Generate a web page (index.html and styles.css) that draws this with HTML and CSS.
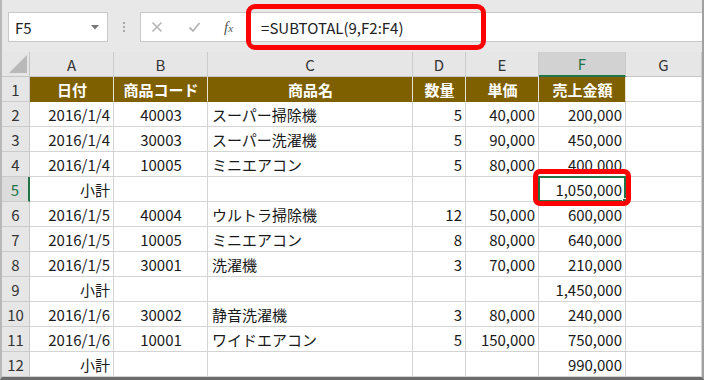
FILE: index.html
```html
<!DOCTYPE html>
<html lang="ja">
<head>
<meta charset="utf-8">
<link rel="stylesheet" href="styles.css">
</head>
<body>
<div class="frame">
  <div class="toolbar">
    <div class="namebox"><span>F5</span><svg class="dd" width="8" height="5" viewBox="0 0 8 5"><path d="M0 0H8L4 4.5Z" fill="#777"/></svg></div>
    <div class="sep"><i></i><i></i><i></i></div>
    <div class="fbar">
      <svg class="ic-x" width="12" height="12" viewBox="0 0 12 12"><path d="M1.5 1.5L10.5 10.5M10.5 1.5L1.5 10.5" stroke="#b4b4b4" stroke-width="1.6" fill="none"/></svg>
      <svg class="ic-ok" width="13" height="12" viewBox="0 0 13 12"><path d="M1.5 6.5L5 10L11.5 2" stroke="#b4b4b4" stroke-width="1.8" fill="none"/></svg>
      <span class="fx">f<span>x</span></span>
      <span class="ftext">=SUBTOTAL(9,F2:F4)</span>
    </div>
    <div class="hl-formula"></div>
  </div>
  <div class="sheet">
    <div class="corner"><svg width="18" height="18" viewBox="0 0 18 18"><path d="M18 0V18H0Z" fill="#b9b9b9"/></svg></div>
    <div class="ch">A</div><div class="ch">B</div><div class="ch">C</div><div class="ch">D</div><div class="ch">E</div><div class="ch sel">F</div><div class="ch">G</div>

    <div class="rh">1</div>
    <div class="c hd">日付</div><div class="c hd">商品コード</div><div class="c hd">商品名</div><div class="c hd">数量</div><div class="c hd">単価</div><div class="c hd">売上金額</div><div class="c"></div>

    <div class="rh">2</div>
    <div class="c r">2016/1/4</div><div class="c m">40003</div><div class="c l">スーパー掃除機</div><div class="c r">5</div><div class="c r">40,000</div><div class="c r">200,000</div><div class="c"></div>

    <div class="rh">3</div>
    <div class="c r">2016/1/4</div><div class="c m">30003</div><div class="c l">スーパー洗濯機</div><div class="c r">5</div><div class="c r">90,000</div><div class="c r">450,000</div><div class="c"></div>

    <div class="rh">4</div>
    <div class="c r">2016/1/4</div><div class="c m">10005</div><div class="c l">ミニエアコン</div><div class="c r">5</div><div class="c r">80,000</div><div class="c r">400,000</div><div class="c"></div>

    <div class="rh sel">5</div>
    <div class="c r">小計</div><div class="c m"></div><div class="c l"></div><div class="c r"></div><div class="c r"></div><div class="c r active">1,050,000<span class="selbox"></span><span class="handle"></span><span class="hl-cell"></span></div><div class="c"></div>

    <div class="rh">6</div>
    <div class="c r">2016/1/5</div><div class="c m">40004</div><div class="c l">ウルトラ掃除機</div><div class="c r">12</div><div class="c r">50,000</div><div class="c r">600,000</div><div class="c"></div>

    <div class="rh">7</div>
    <div class="c r">2016/1/5</div><div class="c m">10005</div><div class="c l">ミニエアコン</div><div class="c r">8</div><div class="c r">80,000</div><div class="c r">640,000</div><div class="c"></div>

    <div class="rh">8</div>
    <div class="c r">2016/1/5</div><div class="c m">30001</div><div class="c l">洗濯機</div><div class="c r">3</div><div class="c r">70,000</div><div class="c r">210,000</div><div class="c"></div>

    <div class="rh">9</div>
    <div class="c r">小計</div><div class="c m"></div><div class="c l"></div><div class="c r"></div><div class="c r"></div><div class="c r">1,450,000</div><div class="c"></div>

    <div class="rh">10</div>
    <div class="c r">2016/1/6</div><div class="c m">30002</div><div class="c l">静音洗濯機</div><div class="c r">3</div><div class="c r">80,000</div><div class="c r">240,000</div><div class="c"></div>

    <div class="rh">11</div>
    <div class="c r">2016/1/6</div><div class="c m">10001</div><div class="c l">ワイドエアコン</div><div class="c r">5</div><div class="c r">150,000</div><div class="c r">750,000</div><div class="c"></div>

    <div class="rh">12</div>
    <div class="c r">小計</div><div class="c m"></div><div class="c l"></div><div class="c r"></div><div class="c r"></div><div class="c r">990,000</div><div class="c"></div>
  </div>
</div>
</body>
</html>
```

FILE: styles.css
```css
* { box-sizing: border-box; margin: 0; padding: 0; }
html, body { width: 704px; height: 380px; overflow: hidden; }
body {
  font-family: "Noto Sans CJK JP", "Noto Sans", sans-serif;
  background: #e8e8e8;
  color: #1a1a1a;
}
.frame {
  width: 704px;
  height: 380px;
  border-left: 2px solid #b8b8b8;
  border-right: 2px solid #a0a0a0;
  border-bottom: 3px solid #6c6c6c;
  background: #e8e8e8;
  display: flex;
  flex-direction: column;
}
.toolbar {
  position: relative;
  height: 52px;
  flex: none;
  display: flex;
  align-items: flex-start;
  padding: 12px 0 0 6px;
}
.namebox {
  width: 100px;
  height: 30px;
  background: #fff;
  border: 1px solid #c8c8c8;
  display: flex;
  align-items: center;
  justify-content: space-between;
  padding: 0 8px 0 6px;
  font-size: 15px;
  color: #222;
}
.sep {
  width: 32px;
  height: 30px;
  display: flex;
  flex-direction: column;
  align-items: center;
  justify-content: center;
  gap: 2px;
}
.sep i { display: block; width: 2px; height: 2px; background: #a8a8a8; }
.fbar {
  flex: 1;
  height: 30px;
  background: #fff;
  border: 1px solid #c8c8c8;
  border-right: 0;
  display: flex;
  align-items: center;
}
.ic-x { margin-left: 10px; flex: none; }
.ic-ok { margin-left: 25px; flex: none; }
.fx {
  margin-left: 23px;
  font-family: "Liberation Serif", serif;
  font-style: italic;
  font-size: 15px;
  color: #555;
}
.fx span { font-size: 11px; }
.ftext {
  margin-left: 28px;
  font-size: 15px;
  color: #222;
}
.hl-formula {
  position: absolute;
  left: 244px;
  top: 4px;
  width: 240px;
  height: 46px;
  border: 5px solid #f00;
  border-radius: 9px;
}
.sheet {
  flex: 1;
  display: grid;
  grid-template-columns: 28px 84px 94px 205px 53px 73px 87px 1fr;
  grid-template-rows: repeat(13, 25px);
  background: #fff;
  font-size: 15px;
}
.corner {
  background: #e6e6e6;
  border-right: 1px solid #c6c6c6;
  border-bottom: 1px solid #c6c6c6;
  display: flex;
  align-items: flex-end;
  justify-content: flex-end;
  padding: 0 2px 3px 0;
}
.ch {
  background: #e6e6e6;
  border-right: 1px solid #cbcbcb;
  border-bottom: 1px solid #c6c6c6;
  display: flex;
  align-items: center;
  justify-content: center;
  color: #333;
}
.ch.sel {
  background: #d2d2d2;
  color: #217346;
  border-bottom: 2px solid #217346;
}
.rh {
  background: #e6e6e6;
  border-right: 1px solid #c6c6c6;
  border-bottom: 1px solid #cbcbcb;
  display: flex;
  align-items: center;
  justify-content: center;
  color: #333;
}
.rh.sel {
  background: #dcdcdc;
  color: #217346;
  border-right: 2px solid #217346;
}
.c {
  border-right: 1px solid #d4d4d4;
  border-bottom: 1px solid #d4d4d4;
  display: flex;
  align-items: center;
  white-space: nowrap;
  padding: 0 3px 0 4px;
}
.c.r { justify-content: flex-end; }
.c.m { justify-content: center; }
.c.l { justify-content: flex-start; }
.c.hd {
  background: #7f6000;
  color: #fff;
  font-weight: bold;
  justify-content: center;
  border-right-color: #e8e2d0;
  border-bottom-color: #7f6000;
}
.active { position: relative; }
.selbox {
  position: absolute;
  left: -1px;
  top: -1px;
  right: -1px;
  bottom: -1px;
  border: 2px solid #217346;
}
.handle {
  position: absolute;
  right: -3px;
  bottom: -3px;
  width: 6px;
  height: 6px;
  background: #217346;
  border: 1px solid #fff;
}
.hl-cell {
  position: absolute;
  left: -6px;
  top: -8px;
  right: -6px;
  bottom: -5px;
  border: 5px solid #f00;
  border-radius: 7px;
}
```
